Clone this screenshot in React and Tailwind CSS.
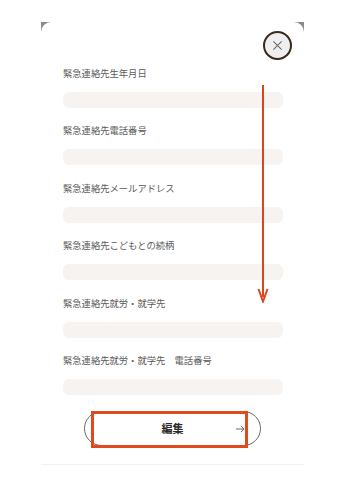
const fields = [
  '緊急連絡先生年月日',
  '緊急連絡先電話番号',
  '緊急連絡先メールアドレス',
  '緊急連絡先こどもとの続柄',
  '緊急連絡先就労・就学先',
  '緊急連絡先就労・就学先　電話番号',
];

function CloseButton() {
  return (
    <button
      type="button"
      className="flex h-[29px] w-[29px] items-center justify-center rounded-full border-2 border-[#3a2a1c] bg-[#efefef]"
    >
      <svg className="h-[11px] w-[11px]" viewBox="0 0 12 12" fill="none" stroke="#666" strokeWidth="1.1">
        <path d="M1.5 1.5l9 9M10.5 1.5l-9 9" />
      </svg>
    </button>
  );
}

function Field({ label }) {
  return (
    <div className="flex flex-col">
      <p className="h-[13px] text-[9.3px] leading-[13px] text-[#5b5b5b] whitespace-pre">{label}</p>
      <div className="mt-[12px] h-[16px] w-[220px] rounded-[6px] bg-[#f7f3f0]" />
    </div>
  );
}

export default function App() {
  return (
    <div
      className="relative min-h-[490px] bg-white pt-[22px]"
      style={{ fontFamily: '"Noto Sans CJK JP", "Noto Sans", sans-serif' }}
    >
      <div className="ml-[41px] w-[263px] bg-[#8a8a8a]">
        <div className="flex h-[443px] flex-col rounded-t-[10px] border-b border-[#f1f1f1] bg-white">
          {/* Header */}
          <div className="flex justify-end pr-[12px] pt-[9px]">
            <CloseButton />
          </div>

          {/* Fields */}
          <div className="mt-[6.5px] flex flex-col gap-[16.5px] pl-[22px]">
            {fields.map((f) => (
              <Field key={f} label={f} />
            ))}
          </div>

          {/* Edit button */}
          <div className="mt-[16px] flex justify-center">
            <div className="relative">
              <button
                type="button"
                className="relative flex h-[35px] w-[177px] items-center justify-center rounded-full border border-[#6a6a6a] bg-white"
              >
                <span className="text-[11px] font-bold text-[#2a2a2a]">編集</span>
                <svg className="absolute right-[15px] top-1/2 h-[8px] w-[9px] -translate-y-1/2" viewBox="0 0 10 9" fill="none" stroke="#444" strokeWidth="0.9">
                  <path d="M0 4.5h9M5.5 1l3.5 3.5L5.5 8" />
                </svg>
              </button>
              {/* annotation box */}
              <div className="pointer-events-none absolute left-[7px] top-0 h-[37px] w-[157px] border-[3px] border-[#e04a1c]" />
            </div>
          </div>
        </div>
      </div>

      {/* annotation arrow */}
      <svg className="pointer-events-none absolute left-[257px] top-[85px]" width="12" height="218" viewBox="0 0 12 218" fill="none">
        <path d="M6 0v212" stroke="#d9481d" strokeWidth="2" />
        <path d="M1.5 204L6 216.5 10.5 204" stroke="#d9481d" strokeWidth="2" strokeLinejoin="miter" />
      </svg>
    </div>
  );
}
